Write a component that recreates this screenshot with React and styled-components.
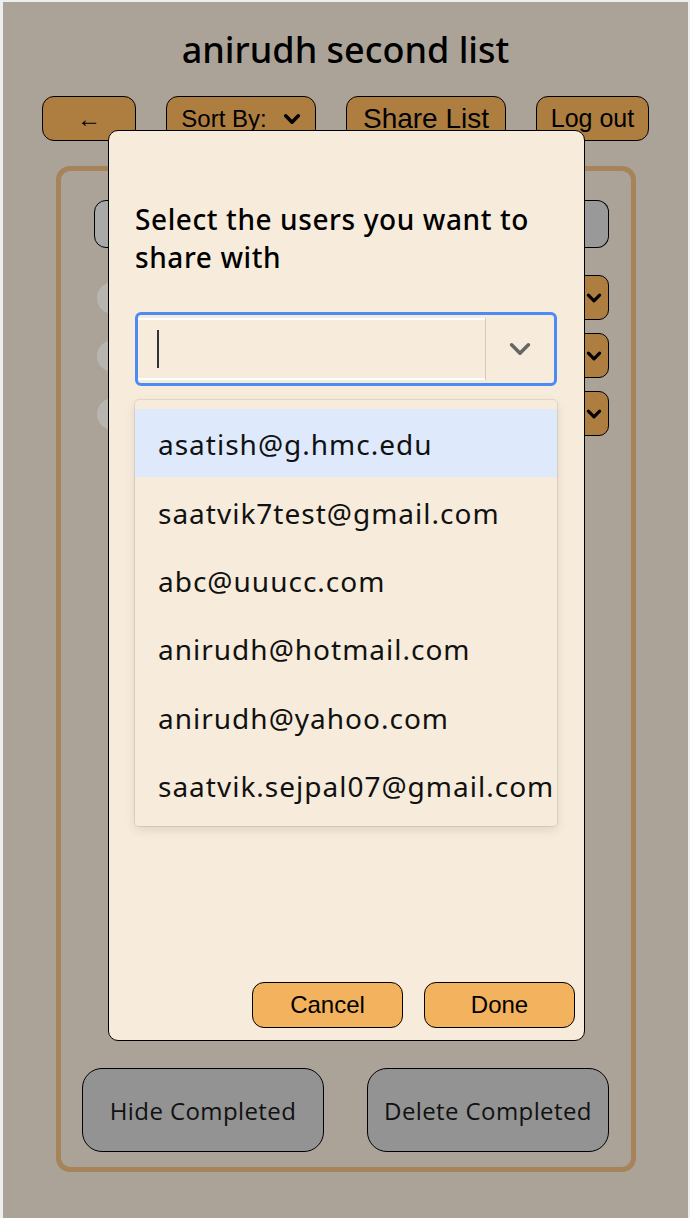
import React from 'react';
import styled, {createGlobalStyle} from 'styled-components';

const GlobalStyle = createGlobalStyle`
  html, body {
    margin: 0;
    padding: 0;
    background: #eceef0;
  }
  * { box-sizing: border-box; }
`;

const Page = styled.div`
  position: relative;
  margin: 2px 2px 0 3px;
  height: 1216px;
  background: #aba398;
  font-family: "Noto Sans", sans-serif;
  display: flex;
  flex-direction: column;
  align-items: center;
`;

const Title = styled.h1`
  margin: 24px 0 0;
  font-size: 36px;
  font-weight: 500;
  line-height: 48px;
  color: #000;
`;

const Toolbar = styled.div`
  display: flex;
  gap: 30px;
  margin-top: 22px;
`;

const BrownButton = styled.div`
  height: 45px;
  width: ${p => p.$w}px;
  background: #ad7e40;
  border: 1.5px solid #000;
  border-radius: 12px;
  display: flex;
  align-items: center;
  justify-content: center;
  gap: 16px;
  font-family: "Liberation Sans", Arial, sans-serif;
  font-size: ${p => p.$size || 24}px;
  color: #000;
`;

const Card = styled.div`
  margin-top: 25px;
  margin-left: 1px;
  width: 580px;
  height: 1006px;
  border: 5px solid #a68358;
  border-radius: 14px;
  padding: 29px 22px 15px 21px;
  display: flex;
  flex-direction: column;
`;

const NewRow = styled.div`
  display: flex;
  height: 48px;
  margin-left: 12px;
`;

const NewInput = styled.div`
  flex: 1;
  background: #a9a9a9;
  border: 1.5px solid #000;
  border-radius: 12px 0 0 12px;
`;

const AddButton = styled.div`
  width: 120px;
  background: #999;
  border: 1.5px solid #000;
  border-left: none;
  border-radius: 0 12px 12px 0;
`;

const ItemList = styled.div`
  flex: 1;
  display: flex;
  flex-direction: column;
  gap: 13px;
  padding-top: 27px;
`;

const Item = styled.div`
  display: flex;
  align-items: center;
  justify-content: space-between;
  height: 45px;
`;

const Circle = styled.div`
  width: 32px;
  height: 32px;
  border-radius: 50%;
  background: #b8b5b0;
  margin-left: 15px;
`;

const ItemSelect = styled.div`
  width: 60px;
  height: 45px;
  background: #ad7e40;
  border: 1.5px solid #000;
  border-radius: 10px;
  display: flex;
  align-items: center;
  justify-content: flex-end;
  padding-right: 6px;
`;

const BottomRow = styled.div`
  display: flex;
  justify-content: space-between;
`;

const GrayButton = styled.div`
  width: 242px;
  height: 84px;
  background: #939393;
  border: 1.5px solid #000;
  border-radius: 20px;
  display: flex;
  align-items: center;
  justify-content: center;
  font-family: "Open Sans", sans-serif;
  font-size: 24px;
  letter-spacing: 0.4px;
  color: #111;
`;

const Modal = styled.div`
  position: absolute;
  top: 128px;
  left: 105px;
  width: 477px;
  height: 911px;
  background: #f7ecdb;
  border: 1.5px solid #000;
  border-radius: 10px;
  padding: 69px 27px 12px 26px;
  display: flex;
  flex-direction: column;
`;

const ModalTitle = styled.div`
  font-size: 28px;
  font-weight: 500;
  line-height: 38px;
  letter-spacing: 0.6px;
  color: #000;
`;

const SelectBox = styled.div`
  margin-top: 36px;
  height: 74px;
  border: 3px solid #4c8bf5;
  border-radius: 6px;
  display: flex;
  align-items: center;
`;

const ValueArea = styled.div`
  flex: 1;
  align-self: stretch;
  margin: 3px 0;
  border-top: 2px solid #fff;
  border-bottom: 2px solid #fff;
  display: flex;
  align-items: center;
  padding-left: 19px;
`;

const Caret = styled.div`
  width: 2px;
  height: 38px;
  background: #333;
`;

const Separator = styled.div`
  width: 1px;
  height: 62px;
  background: #cfcac2;
`;

const Indicator = styled.div`
  width: 68px;
  display: flex;
  justify-content: center;
  color: #666;
`;

const Menu = styled.div`
  margin-top: 14px;
  background: #f7ecdb;
  border-radius: 4px;
  box-shadow: 0 0 0 1px rgba(0, 0, 0, 0.08), 0 4px 11px rgba(0, 0, 0, 0.1);
  padding: 9px 0 7px;
`;

const Option = styled.div`
  height: 68.4px;
  display: flex;
  align-items: center;
  padding-left: 23px;
  padding-top: 2px;
  font-size: 28px;
  letter-spacing: 1px;
  color: #111;
  white-space: nowrap;
  background: ${p => (p.$active ? '#deeafc' : 'transparent')};
`;

const Footer = styled.div`
  margin-top: auto;
  margin-right: -18px;
  display: flex;
  justify-content: flex-end;
  gap: 21px;
`;

const OrangeButton = styled.div`
  width: 151px;
  height: 46px;
  background: #f2b25e;
  border: 1.5px solid #000;
  border-radius: 12px;
  display: flex;
  align-items: center;
  justify-content: center;
  font-family: "Liberation Sans", Arial, sans-serif;
  font-size: 24px;
  color: #000;
`;

const Chevron = ({size = 18, stroke = 4, color = '#000'}) => (
  <svg width={size} height={size} viewBox="0 0 20 20">
    <path d="M3 6.5 L10 13.5 L17 6.5" fill="none" stroke={color} strokeWidth={stroke} strokeLinecap="round" strokeLinejoin="round" />
  </svg>
);

const users = [
  'asatish@g.hmc.edu',
  'saatvik7test@gmail.com',
  'abc@uuucc.com',
  'anirudh@hotmail.com',
  'anirudh@yahoo.com',
  'saatvik.sejpal07@gmail.com',
];

export default function App() {
  return (
    <>
      <GlobalStyle />
      <Page>
        <Title>anirudh second list</Title>
        <Toolbar>
          <BrownButton $w={94}>←</BrownButton>
          <BrownButton $w={150}>Sort By: <Chevron size={18} /></BrownButton>
          <BrownButton $w={160} $size={28}>Share List</BrownButton>
          <BrownButton $w={113} $size={25}>Log out</BrownButton>
        </Toolbar>
        <Card>
          <NewRow>
            <NewInput />
            <AddButton />
          </NewRow>
          <ItemList>
            {[0, 1, 2].map(i => (
              <Item key={i}>
                <Circle />
                <ItemSelect><Chevron size={16} /></ItemSelect>
              </Item>
            ))}
          </ItemList>
          <BottomRow>
            <GrayButton>Hide Completed</GrayButton>
            <GrayButton>Delete Completed</GrayButton>
          </BottomRow>
        </Card>

        <Modal>
          <ModalTitle>Select the users you want to share with</ModalTitle>
          <SelectBox>
            <ValueArea><Caret /></ValueArea>
            <Separator />
            <Indicator><Chevron size={24} stroke={3} color="#666" /></Indicator>
          </SelectBox>
          <Menu>
            {users.map((u, i) => (
              <Option key={u} $active={i === 0}>{u}</Option>
            ))}
          </Menu>
          <Footer>
            <OrangeButton>Cancel</OrangeButton>
            <OrangeButton>Done</OrangeButton>
          </Footer>
        </Modal>
      </Page>
    </>
  );
}
